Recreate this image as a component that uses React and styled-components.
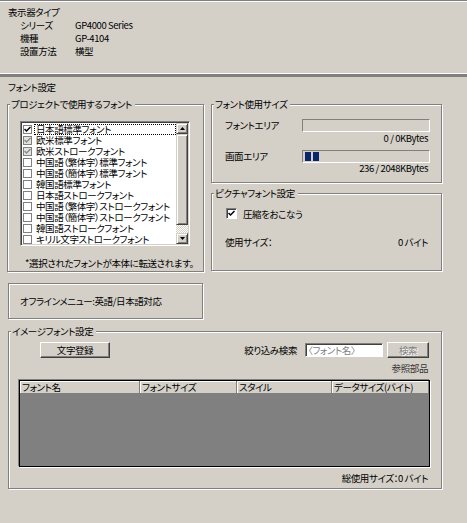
import styled, { createGlobalStyle } from "styled-components";

const GlobalStyle = createGlobalStyle`
  html, body { margin: 0; padding: 0; background: #d4d0c8; }
  body {
    font-family: "Noto Sans CJK JP", "Liberation Sans", sans-serif;
    font-size: 9.5px;
    letter-spacing: -0.4px;
    color: #000;
    font-feature-settings: "palt";
  }
  * { box-sizing: border-box; }
`;

const Window = styled.div`
  width: 467px;
  height: 523px;
  border-top: 1px solid #808080;
  box-shadow: inset 0 1px 0 #fff;
  padding-top: 5px;
  overflow: hidden;
`;

const Info = styled.div`
  padding-left: 8px;
  line-height: 13px;
`;

const InfoRow = styled.div`
  display: grid;
  grid-template-columns: 55px 1fr;
  padding-left: 12px;
`;

const Separator = styled.div`
  margin-top: 15px;
  height: 4px;
  background: #808080;
  border-top: 1px solid #fff;
`;

const SectionTitle = styled.div`
  margin-top: 4px;
  padding-left: 8px;
  line-height: 13px;
`;

const MainGrid = styled.div`
  display: grid;
  grid-template-columns: 197px 231px;
  gap: 7px;
  padding-left: 7px;
  margin-top: 4px;
  align-items: start;
`;

const Column = styled.div`
  display: flex;
  flex-direction: column;
  gap: 4px;
`;

const Group = styled.fieldset`
  margin: ${(p) => p.$margin || 0};
  padding: 0;
  min-width: 0;
  width: ${(p) => (p.$w ? `${p.$w}px` : "auto")};
  height: ${(p) => p.$h}px;
  border: 1px solid #808080;
  box-shadow: inset 1px 1px 0 #fff, 1px 1px 0 #fff;
`;

const Legend = styled.legend`
  margin-left: 2px;
  padding: 0 3px 0 1px;
  line-height: 13px;
  background: #d4d0c8;
`;

const GroupBody = styled.div`
  padding: ${(p) => p.$pad};
`;

/* list box */
const ListBox = styled.div`
  display: flex;
  width: 170px;
  height: 125px;
  background: #fff;
  border: 1px solid;
  border-color: #808080 #fff #fff #808080;
  box-shadow: inset 1px 1px 0 #404040, inset -1px -1px 0 #d4d0c8;
  padding: 1px;
`;

const Items = styled.div`
  flex: 1;
  padding-top: 1px;
  padding-left: 1px;
`;

const Item = styled.div`
  display: flex;
  align-items: center;
  height: 11px;
  white-space: nowrap;
`;

const ItemText = styled.span`
  flex: 1;
  margin-left: 2px;
  padding-left: 2px;
  height: 11px;
  line-height: 11px;
  outline: ${(p) => (p.$focus ? "1px dotted #000" : "none")};
  outline-offset: -1px;
`;

const SmallCheck = styled.span`
  width: 9px;
  height: 9px;
  flex: none;
  border: 1px solid #808080;
  background: ${(p) => (p.$state === "dis" ? "#e4e2dc" : "#fff")};
  display: flex;
  align-items: center;
  justify-content: center;
`;

const ScrollBar = styled.div`
  width: 12px;
  display: flex;
  flex-direction: column;
`;

const ArrowButton = styled.div`
  height: 11px;
  background: #d4d0c8;
  border: 1px solid;
  border-color: #d4d0c8 #404040 #404040 #d4d0c8;
  box-shadow: inset 1px 1px 0 #fff, inset -1px -1px 0 #808080;
  display: flex;
  align-items: center;
  justify-content: center;
`;

const Thumb = styled.div`
  flex: 1;
  background: #d4d0c8;
  border: 1px solid;
  border-color: #d4d0c8 #404040 #404040 #d4d0c8;
  box-shadow: inset 1px 1px 0 #fff, inset -1px -1px 0 #808080;
`;

const Track = styled.div`
  height: 8px;
  background: repeating-conic-gradient(#fff 0 25%, #d4d0c8 0 50%) 0 0 / 2px 2px;
`;

const Note = styled.div`
  margin-top: 11px;
  padding-left: 17px;
  line-height: 12px;
  white-space: nowrap;
`;

/* usage */
const UsageRow = styled.div`
  display: grid;
  grid-template-columns: 77px 128px;
  align-items: center;
  height: 13px;
  margin-top: ${(p) => p.$mt || 0}px;
`;

const Bar = styled.div`
  height: 13px;
  border: 1px solid;
  border-color: #808080 #fff #fff #808080;
  display: flex;
  gap: 2px;
  padding: 1px 2px;
`;

const Block = styled.span`
  width: 6px;
  height: 9px;
  background: #0a246a;
`;

const ValueLine = styled.div`
  width: 205px;
  text-align: right;
  padding-right: 2px;
  line-height: 12px;
  margin-top: ${(p) => p.$mt || 0}px;
`;

const CheckRow = styled.label`
  display: flex;
  align-items: center;
  gap: 6px;
  height: 13px;
  padding-left: 1px;
`;

const Check = styled.span`
  width: 11px;
  height: 11px;
  background: #fff;
  border: 1px solid;
  border-color: #808080 #fff #fff #808080;
  box-shadow: inset 1px 1px 0 #404040;
  display: flex;
  align-items: center;
  justify-content: center;
`;

const SpreadRow = styled.div`
  display: flex;
  justify-content: space-between;
  width: 205px;
  padding-right: 2px;
  line-height: 12px;
  margin-top: ${(p) => p.$mt || 0}px;
`;

/* offline */
const EtchedBox = styled.div`
  margin: 11px 0 0 8px;
  width: 195px;
  height: 36px;
  border: 1px solid #808080;
  box-shadow: inset 1px 1px 0 #fff, 1px 1px 0 #fff;
  padding-left: 11px;
  display: flex;
  align-items: center;
`;

/* image fonts */
const Toolbar = styled.div`
  display: flex;
  align-items: center;
  height: 16px;
`;

const Button = styled.button`
  width: ${(p) => p.$w}px;
  height: 16px;
  margin: 0;
  padding: 0;
  font: inherit;
  letter-spacing: inherit;
  line-height: 12px;
  background: #d4d0c8;
  border: 1px solid;
  border-color: #fff #404040 #404040 #fff;
  box-shadow: inset -1px -1px 0 #808080;
  color: ${(p) => (p.disabled ? "#808080" : "#000")};
  text-shadow: ${(p) => (p.disabled ? "1px 1px 0 #fff" : "none")};
`;

const SearchLabel = styled.span`
  margin-left: auto;
`;

const SearchInput = styled.div`
  width: 78px;
  height: 14px;
  margin-left: 8px;
  background: #fff;
  border: 1px solid;
  border-color: #808080 #fff #fff #808080;
  box-shadow: inset 1px 1px 0 #404040;
  padding-left: 2px;
  color: #808080;
  line-height: 12px;
  white-space: nowrap;
`;

const RightText = styled.div`
  text-align: right;
  padding-right: 2px;
  line-height: 12px;
  margin-top: ${(p) => p.$mt}px;
  color: ${(p) => p.$color || "#000"};
`;

const ListView = styled.div`
  margin-top: 6px;
  height: 87px;
  border: 1px solid #000;
  box-shadow: -1px -1px 0 #808080, 1px 1px 0 #fff;
  background: #808080;
`;

const Header = styled.div`
  display: grid;
  grid-template-columns: 120px 97px 95px 1fr;
  height: 12px;
  border-bottom: 1px solid #404040;
`;

const HeaderCell = styled.div`
  background: #d4d0c8;
  border-right: 1px solid #808080;
  box-shadow: inset 1px 1px 0 #fff;
  padding-left: 2px;
  line-height: 12px;
  white-space: nowrap;
`;

const fonts = [
  { name: "日本語標準フォント", state: "on", focus: true },
  { name: "欧米標準フォント", state: "dis" },
  { name: "欧米ストロークフォント", state: "dis" },
  { name: "中国語（繁体字）標準フォント", state: "off" },
  { name: "中国語（簡体字）標準フォント", state: "off" },
  { name: "韓国語標準フォント", state: "off" },
  { name: "日本語ストロークフォント", state: "off" },
  { name: "中国語（繁体字）ストロークフォント", state: "off" },
  { name: "中国語（簡体字）ストロークフォント", state: "off" },
  { name: "韓国語ストロークフォント", state: "off" },
  { name: "キリル文字ストロークフォント", state: "off" },
];

const columns = ["フォント名", "フォントサイズ", "スタイル", "データサイズ(バイト)"];

const Tick = ({ color = "#000", size = 7 }) => (
  <svg width={size} height={size} viewBox="0 0 7 7">
    <path d="M0.5 3 L2.5 5 L6.5 1" stroke={color} strokeWidth="1.5" fill="none" />
  </svg>
);

const Arrow = ({ down }) => (
  <svg width="5" height="3" viewBox="0 0 5 3">
    <path d={down ? "M0 0 H5 L2.5 3 Z" : "M0 3 H5 L2.5 0 Z"} fill="#000" />
  </svg>
);

const App = () => (
  <>
    <GlobalStyle />
    <Window>
      <Info>
        <div>表示器タイプ</div>
        <InfoRow><span>シリーズ</span><span>GP4000 Series</span></InfoRow>
        <InfoRow><span>機種</span><span>GP-4104</span></InfoRow>
        <InfoRow><span>設置方法</span><span>横型</span></InfoRow>
      </Info>
      <Separator />
      <SectionTitle>フォント設定</SectionTitle>
      <MainGrid>
        <Group $h={174}>
          <Legend>プロジェクトで使用するフォント</Legend>
          <GroupBody $pad="10px 0 0 12px">
            <ListBox>
              <Items>
                {fonts.map((f) => (
                  <Item key={f.name}>
                    <SmallCheck $state={f.state}>
                      {f.state === "on" && <Tick />}
                      {f.state === "dis" && <Tick color="#8c8c8c" />}
                    </SmallCheck>
                    <ItemText $focus={f.focus}>{f.name}</ItemText>
                  </Item>
                ))}
              </Items>
              <ScrollBar>
                <ArrowButton><Arrow /></ArrowButton>
                <Thumb />
                <Track />
                <ArrowButton><Arrow down /></ArrowButton>
              </ScrollBar>
            </ListBox>
          </GroupBody>
          <Note>*選択されたフォントが本体に転送されます。</Note>
        </Group>
        <Column>
          <Group $h={85}>
            <Legend>フォント使用サイズ</Legend>
            <GroupBody $pad="7px 0 0 13px">
              <UsageRow>
                <span>フォントエリア</span>
                <Bar />
              </UsageRow>
              <ValueLine $mt={1}>0 / 0KBytes</ValueLine>
              <UsageRow $mt={5}>
                <span>画面エリア</span>
                <Bar>
                  <Block />
                  <Block />
                </Bar>
              </UsageRow>
              <ValueLine>236 / 2048KBytes</ValueLine>
            </GroupBody>
          </Group>
          <Group $h={84}>
            <Legend>ピクチャフォント設定</Legend>
            <GroupBody $pad="7px 0 0 13px">
              <CheckRow>
                <Check><Tick /></Check>
                <span>圧縮をおこなう</span>
              </CheckRow>
              <SpreadRow $mt={16}>
                <span>使用サイズ：</span>
                <span>0 バイト</span>
              </SpreadRow>
            </GroupBody>
          </Group>
        </Column>
      </MainGrid>
      <EtchedBox>オフラインメニュー:英語/日本語対応</EtchedBox>
      <Group $h={164} $w={434} $margin="6px 0 0 8px">
        <Legend>イメージフォント設定</Legend>
        <GroupBody $pad="4px 11px 0 10px">
          <Toolbar>
            <Button $w={70} style={{ marginLeft: 21 }}>文字登録</Button>
            <SearchLabel>絞り込み検索</SearchLabel>
            <SearchInput>〈フォント名〉</SearchInput>
            <Button $w={42} disabled style={{ marginLeft: 4, marginRight: 1 }}>検索</Button>
          </Toolbar>
          <RightText $mt={4} $color="#333">参照部品</RightText>
          <ListView>
            <Header>
              {columns.map((c) => (
                <HeaderCell key={c}>{c}</HeaderCell>
              ))}
            </Header>
          </ListView>
          <RightText $mt={5}>総使用サイズ：0 バイト</RightText>
        </GroupBody>
      </Group>
    </Window>
  </>
);

export default App;
